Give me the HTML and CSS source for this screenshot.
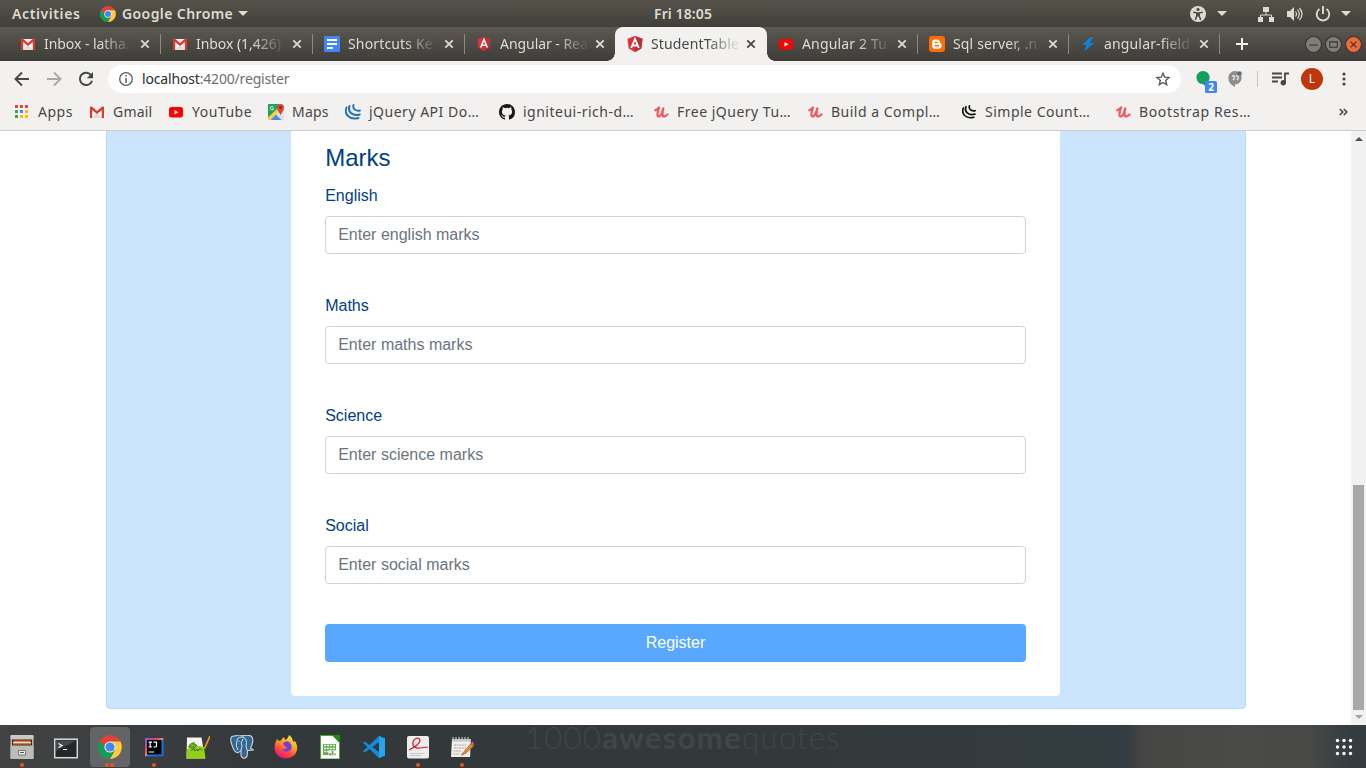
FILE: index.html
```html
<!DOCTYPE html>
<html lang="en">
<head>
<meta charset="utf-8">
<title>StudentTable</title>
<link rel="stylesheet" href="styles.css">
</head>
<body>
<svg class="defs" width="0" height="0" aria-hidden="true">
  <symbol id="chrome" viewBox="0 0 24 24">
    <circle cx="12" cy="12" r="12" fill="#db4437"/>
    <path d="M1.6 6A12 12 0 0 0 12 24L17.2 15 12 12H7Z" fill="#0f9d58"/>
    <path d="M12 24A12 12 0 0 0 22.4 6.5H12L17.2 15Z" fill="#ffcd40"/>
    <circle cx="12" cy="12" r="5.6" fill="#f1f1f1"/><circle cx="12" cy="12" r="4.6" fill="#4285f4"/>
  </symbol>
  <symbol id="gmail" viewBox="0 0 16 16">
    <path d="M1 3h14v11H1z" fill="#f2f2f2"/><path d="M3 14l5-5 5 5z" fill="#ddd"/>
    <path d="M1 14V3.4Q1 2.500 2 2.500h.8L8 7l5.200-4.500H14q1 0 1 .9V14h-2.200V6L8 10 3.200 6v8z" fill="#d93b30"/>
  </symbol>
  <symbol id="docs" viewBox="0 0 16 16"><rect width="16" height="16" rx="1.300" fill="#4285f4"/><path d="M3 4h10M3 8h10M3 12h6" stroke="#fff" stroke-width="2"/></symbol>
  <symbol id="angular" viewBox="0 0 16 16"><path d="M8 0l7.500 2.700L14.300 12.500 8 16 1.700 12.500.5 2.700z" fill="#dd3238"/><path d="M8 0l7.500 2.700L14.300 12.500 8 16z" fill="#bd2f36"/><path d="M4.200 12L8 3l3.800 9M5.800 9.500h4.400" fill="none" stroke="#fff" stroke-width="1.800"/></symbol>
  <symbol id="youtube" viewBox="0 0 16 16"><rect x="1" y="3" width="14" height="10.500" rx="2.500" fill="#f00"/><path d="M6.500 6v4.400l4-2.200z" fill="#fff"/></symbol>
  <symbol id="blogger" viewBox="0 0 16 16"><rect width="16" height="16" rx="3" fill="#ff6b05"/><path d="M6 3.500h2.200a2.500 2.500 0 0 1 2.500 2.500q0 1.200 1.800 1.500V10a2.700 2.700 0 0 1-2.700 2.700H6A2.700 2.700 0 0 1 3.200 10V6.200A2.700 2.700 0 0 1 6 3.500z" fill="#fff"/><path d="M6.200 6.500h1.700M6.200 9.800h3.300" stroke="#ff6b05" stroke-width="1.400" stroke-linecap="round"/></symbol>
  <symbol id="bolt" viewBox="0 0 16 16"><path d="M10.500 1L2.500 9h4L4 15.500 14 7H9.600L13 1z" fill="#0b84e0"/></symbol>
  <symbol id="maps" viewBox="0 0 16 16"><rect width="16" height="16" rx="1.500" fill="#e0e2e5"/><path d="M0 15V1q0-1 1-1h10v5L0 16z" fill="#1ea35a"/><path d="M0 16V13.500L10.500 3.500 13 6 3 16z" fill="#ffcf3e"/><path d="M2.500 16l5.500-5.500L13.500 16z" fill="#4a8af4"/><path d="M9 3.500a3.500 3.500 0 0 1 7 0q0 2-1.700 4.500L12.600 11 10.700 8Q9 5.500 9 3.500z" fill="#db4437"/><circle cx="12.500" cy="3.500" r="1.300" fill="#7b231e"/><path d="M5.400 3.200A1.700 1.700 0 1 0 5.500 5H4" fill="none" stroke="#fff"/></symbol>
  <symbol id="jquery" viewBox="0 0 16 16"><g fill="none" stroke="currentColor" stroke-linecap="round"><path d="M1.500 3.500Q-.5 8.500 3 12q4 3.800 10.500 2" stroke-width="1.900"/><path d="M4.500 2Q3 6.500 6 9q3.500 3 8.700 1.500" stroke-width="2.100"/><path d="M8.500 1Q7.500 4 10 5.700q2.500 1.500 5 .8" stroke-width="1.900"/></g></symbol>
  <symbol id="github" viewBox="0 0 16 16"><path d="M8 0C3.580 0 0 3.580 0 8c0 3.540 2.290 6.530 5.470 7.590.4.070.55-.17.55-.38v-1.490c-2.230.48-2.690-.95-2.690-.95-.36-.93-.89-1.170-.89-1.170-.73-.5.050-.49.050-.49.8.06 1.230.83 1.230.83.71 1.230 1.870.87 2.330.66.070-.52.280-.87.510-1.070-1.780-.2-3.640-.89-3.640-3.950 0-.87.310-1.590.82-2.150-.08-.2-.36-1.020.08-2.120 0 0 .67-.21 2.200.82a7.600 7.600 0 0 1 4 0c1.530-1.040 2.200-.82 2.200-.82.44 1.100.16 1.920.08 2.120.51.560.82 1.270.82 2.150 0 3.070-1.870 3.750-3.650 3.950.29.25.54.73.54 1.480v2.200c0 .21.150.46.550.38A8 8 0 0 0 16 8c0-4.420-3.580-8-8-8z" fill="#1b1817"/></symbol>
  <symbol id="udemy" viewBox="0 0 16 16"><path d="M2.300 6.300Q4.500 5.300 6 3.500 4.500 8 4.400 10.500q.1 2.600 2.200 1.700Q8.600 11 10.300 4.500 9 9 9.800 11.700q1 2 4.700-1.200" fill="none" stroke="#ef5b60" stroke-width="2.300" stroke-linecap="round" stroke-linejoin="round"/></symbol>
  <symbol id="x" viewBox="0 0 10 10"><path d="M1.300 1.300l7.400 7.400M8.700 1.300L1.300 8.700" stroke="currentColor" stroke-width="1.800"/></symbol>
</svg>

<div class="topbar">
  <span class="activities">Activities</span>
  <svg class="app-icon"><use href="#chrome"/></svg>
  <span class="app-name">Google Chrome</span>
  <i class="caret"></i>
  <span class="clock">Fri 18:05</span>
  <div class="tray">
    <svg width="16" height="16" viewBox="0 0 16 16"><circle cx="8" cy="8" r="8" fill="#dfdbd2"/><circle cx="8" cy="3.500" r="1.600" fill="#4b4a44"/><path d="M3.200 6.300l3.600.5v3L5.300 14M12.800 6.300l-3.600.5v3l1.500 4.200M8 6.500v4" fill="none" stroke="#4b4a44" stroke-width="1.500"/></svg>
    <i class="caret c1"></i>
    <svg class="net" width="16" height="16" viewBox="0 0 16 16"><path d="M5 1h6v5H5zM0 11h5v5H0zM11 11h5v5h-5z" fill="#dfdbd2"/><path d="M8 5v4M2.500 12V9h11v3" fill="none" stroke="#dfdbd2"/></svg>
    <svg class="vol" width="17" height="16" viewBox="0 0 17 16"><path d="M1 5h3l4-4v14l-4-4H1z" fill="#dfdbd2"/><path d="M9.500 5.500q2 2.500 0 5M11.500 3.500q3.500 4.500 0 9M13.500 2q5 6 0 12" fill="none" stroke="#dfdbd2" stroke-width="1.200"/></svg>
    <svg class="pow" width="16" height="16" viewBox="0 0 16 16"><path d="M4.500 3a6.300 6.300 0 1 0 7 0M8 0v8" fill="none" stroke="#dfdbd2" stroke-width="1.900"/></svg>
    <i class="caret c2"></i>
  </div>
</div>

<div class="tabs">
  <div class="tab wide"><svg class="fav"><use href="#gmail"/></svg><span class="title snug">Inbox - latha.</span><svg class="close"><use href="#x"/></svg></div>
  <div class="tab wide"><svg class="fav"><use href="#gmail"/></svg><span class="title snug">Inbox (1,426)</span><svg class="close"><use href="#x"/></svg></div>
  <div class="tab wide"><svg class="fav"><use href="#docs"/></svg><span class="title">Shortcuts Ke</span><svg class="close"><use href="#x"/></svg></div>
  <div class="tab last"><svg class="fav small"><use href="#angular"/></svg><span class="title snug">Angular - Rea</span><svg class="close"><use href="#x"/></svg></div>
  <div class="tab active"><svg class="fav"><use href="#angular"/></svg><span class="title">StudentTable</span><svg class="close"><use href="#x"/></svg></div>
  <div class="tab"><svg class="fav"><use href="#youtube"/></svg><span class="title">Angular 2 Tu</span><svg class="close"><use href="#x"/></svg></div>
  <div class="tab"><svg class="fav"><use href="#blogger"/></svg><span class="title">Sql server, .n</span><svg class="close"><use href="#x"/></svg></div>
  <div class="tab"><svg class="fav"><use href="#bolt"/></svg><span class="title">angular-field</span><svg class="close"><use href="#x"/></svg></div>
  <svg class="plus" width="12" height="12" viewBox="0 0 12 12"><path d="M6 0v12M0 6h12" stroke="#f2f1f0" stroke-width="2"/></svg>
  <div class="window-buttons">
    <svg viewBox="0 0 16 16"><circle cx="8" cy="8" r="7.500"/><path d="M4 8.500h8"/></svg>
    <svg viewBox="0 0 16 16"><circle cx="8" cy="8" r="7.500"/><path d="M4.500 5.500h7v5h-7z"/></svg>
    <svg class="quit" viewBox="0 0 16 16"><circle cx="8" cy="8" r="7.500"/><path d="M5.200 5.200l5.600 5.600M10.800 5.200l-5.600 5.600"/></svg>
  </div>
</div>

<div class="toolbar">
  <svg width="16" height="16" viewBox="0 0 16 16"><path d="M15 8H2M8 1.500L1.500 8 8 14.500" fill="none" stroke="#474747" stroke-width="1.900"/></svg>
  <svg width="16" height="16" viewBox="0 0 16 16"><path d="M1 8h13M8 1.500L14.500 8 8 14.500" fill="none" stroke="#aaa9a7" stroke-width="1.900"/></svg>
  <svg width="16" height="16" viewBox="0 0 16 16"><path d="M13.300 4.500A6.200 6.200 0 1 0 14 9.700" fill="none" stroke="#474747" stroke-width="2"/><path d="M15 1v6.200H8.800z" fill="#474747"/></svg>
  <div class="omnibox">
    <svg width="14" height="14" viewBox="0 0 14 14"><circle cx="7" cy="7" r="6.300" fill="none" stroke="#5a5a5a" stroke-width="1.300"/><path d="M7 3v1.600M7 6v5" stroke="#5a5a5a" stroke-width="1.500"/></svg>
    <span class="url"><b>localhost</b>:4200/register</span>
    <svg class="star" width="16" height="16" viewBox="0 0 16 16"><path d="M8 2.200l1.700 4 4.300.4-3.300 2.900 1 4.200L8 11.500l-3.700 2.200 1-4.200L2 6.600l4.300-.4z" fill="none" stroke="#5a5a5a" stroke-width="1.400"/></svg>
  </div>
  <div class="ext">
    <svg width="22" height="25" viewBox="0 0 22 25"><circle cx="7" cy="9.500" r="6.600" fill="#12a05c"/><path d="M5 14l4 4v-4z" fill="#12a05c"/><rect x="9" y="13" width="12" height="12" rx="1.500" fill="#4285f4"/></svg>
    <span class="badge">2</span>
  </div>
  <svg class="hang" width="14" height="16" viewBox="0 0 14 16"><path d="M7 0a6.700 6.700 0 0 1 0 13.400V16Q.3 13 .3 6.700A6.700 6.700 0 0 1 7 0z" fill="#8e8e8e"/><path d="M4 5h2.300v2.500L5 9M7.800 5h2.300v2.500L8.800 9" fill="none" stroke="#e4e4e4" stroke-width="1.300"/><circle cx="11.500" cy="2.500" r="2.200" fill="#686868"/></svg>
  <i class="rule"></i>
  <svg class="music" width="17" height="14" viewBox="0 0 17 14"><path d="M0 1.500h10M0 5.500h10M0 9.500h6M13 11V1.500h4" fill="none" stroke="#474747" stroke-width="1.800"/><circle cx="11.300" cy="10.800" r="2.700" fill="#474747"/></svg>
  <span class="avatar">L</span>
  <svg width="4" height="14" viewBox="0 0 4 14"><g fill="#474747"><circle cx="2" cy="2" r="1.600"/><circle cx="2" cy="7" r="1.600"/><circle cx="2" cy="12" r="1.600"/></g></svg>
</div>

<div class="bookmarks">
  <div class="apps"><svg viewBox="0 0 16 16"><path d="M2 1h3v3H2zM7 1h3v3H7zM12 1h3v3h-3z" fill="#ea4335"/><path d="M2 6h3v3H2zM2 11h3v3H2z" fill="#34a853"/><path d="M7 6h3v3H7z" fill="#4285f4"/><path d="M12 6h3v3h-3zM7 11h3v3H7zM12 11h3v3h-3z" fill="#fbbc05"/></svg><span>Apps</span></div>
  <div class="tight"><svg><use href="#gmail"/></svg><span>Gmail</span></div>
  <div><svg><use href="#youtube"/></svg><span>YouTube</span></div>
  <div class="tight"><svg><use href="#maps"/></svg><span>Maps</span></div>
  <div class="blue"><svg><use href="#jquery"/></svg><span>jQuery API Do…</span></div>
  <div><svg><use href="#github"/></svg><span>igniteui-rich-d…</span></div>
  <div><svg><use href="#udemy"/></svg><span>Free jQuery Tu…</span></div>
  <div><svg><use href="#udemy"/></svg><span>Build a Compl…</span></div>
  <div><svg class="dark"><use href="#jquery"/></svg><span>Simple Count…</span></div>
  <div class="boot"><svg><use href="#udemy"/></svg><span>Bootstrap Res…</span></div>
  <svg class="more" width="9" height="8" viewBox="0 0 9 8"><path d="M.8 1l3 3-3 3M4.800 1l3 3-3 3" fill="none" stroke="#3f3f3f" stroke-width="1.500"/></svg>
</div>

<div class="viewport">
  <main class="page">
    <section class="panel">
      <form class="card">
        <h4>Marks</h4>
        <div class="field"><label for="en">English</label><input id="en" placeholder="Enter english marks"></div>
        <div class="field"><label for="ma">Maths</label><input id="ma" placeholder="Enter maths marks"></div>
        <div class="field"><label for="sc">Science</label><input id="sc" placeholder="Enter science marks"></div>
        <div class="field"><label for="so">Social</label><input id="so" placeholder="Enter social marks"></div>
        <button type="button">Register</button>
      </form>
    </section>
  </main>
  <div class="scrollbar"><i class="up"></i><i class="thumb"></i><i class="down"></i></div>
</div>

<div class="dock">
  <div class="launcher run1"><svg viewBox="0 0 24 24"><rect x=".5" width="23" height="24" rx="1.500" fill="#b9b8b5"/><rect x=".5" width="23" height="4" rx="1" fill="#c9c8c5"/><rect x="2" y="4.500" width="20" height="7" fill="#3c302b"/><path d="M3.500 5.500h17V7h-17z" fill="#e9732f"/><path d="M3 7h18v1.500H3z" fill="#f3dfca"/><path d="M3 8.500h18v1H3z" fill="#e9732f"/><path d="M.5 10.500h23V23q0 1-1 1h-21q-1 0-1-1z" fill="#bdbcb9"/><path d="M8.500 15.500h7v4.500h-7z" fill="#eee" stroke="#777"/><path d="M10 17.500h4" stroke="#555"/></svg></div>
  <div class="launcher"><svg viewBox="0 0 24 24"><rect x=".7" y="4.200" width="22.600" height="18.500" fill="#24282a" stroke="#d8d8d5" stroke-width="1.500"/><path d="M2 5.500h20L2 16z" fill="#45494c"/><path d="M4.500 8.500l3.500 2-3.500 2M9 14.500h4" fill="none" stroke="#fff" stroke-width="1.200"/></svg></div>
  <div class="launcher current run2"><svg viewBox="0 0 24 24"><use href="#chrome"/></svg></div>
  <div class="launcher run1"><svg viewBox="0 0 24 24"><defs><linearGradient id="ij" x2="1" y2="1"><stop stop-color="#7b5cf0"/><stop offset=".3" stop-color="#d33c86"/><stop offset=".5" stop-color="#fb8651"/><stop offset=".55" stop-color="#087cfa"/><stop offset="1" stop-color="#236cf5"/></linearGradient></defs><path d="M3 3h18.500v18L3 21.500z" fill="url(#ij)"/><path d="M5 5h14.500v14.500H5z" fill="#000"/><path d="M6.500 7.200h3.500M8.200 7v5M6.500 12h3.500M11.500 7.200h3v3.500q0 1.300-1.300 1.300h-1.700M6.500 17h5.500" fill="none" stroke="#fff" stroke-width="1.200"/></svg></div>
  <div class="launcher"><svg viewBox="0 0 24 24"><path d="M1 2.500h14.500l3.500 21H.5z" fill="#f5f6ee"/><path d="M1 14q8-5 17-2l1.500 11.500H.5z" fill="#91cf19"/><path d="M2.500 12q1-4 6-4.500l-.5 2 3 .5-1.500 2L6 13z" fill="#69b51d" stroke="#35651c" stroke-width=".7"/><path d="M5 15.500l3-2 1 2.500 2-2 1 2 2-2.500 2 2" fill="none" stroke="#35651c"/><path d="M24 1l-5.500 12.500" stroke="#e99a25" stroke-width="1.700"/></svg></div>
  <div class="launcher"><svg viewBox="0 0 24 24"><path d="M5 1Q10-1 13 1q4-1.500 8 0 4 3-.5 12l3 2-6 .5-.5 6q-4 4-6-1v-5Q7 20 4 15-3 0 5 1z" fill="#336791" stroke="#d0d8df" stroke-width="1.100"/><path d="M8 15Q5 11 7 6q0-4 5-4 6 1 4 9l1 4M13 4q-3 4-1 7l-1 4" fill="none" stroke="#d7e0e7" stroke-width="1"/><circle cx="9" cy="6" r=".6" fill="#fff"/></svg></div>
  <div class="launcher"><svg viewBox="0 0 24 24"><defs><linearGradient id="ff" x1=".8" x2=".3" y2="1"><stop stop-color="#fff04a"/><stop offset=".4" stop-color="#ffa51f"/><stop offset=".75" stop-color="#ff3a4c"/><stop offset="1" stop-color="#e01585"/></linearGradient></defs><path d="M3 4l2 2 2-.5Q8 3 10 2l1 3q3-1 4-5 4 3 4 7l2-1q3 5 2 9-2 8-11 8.500Q2 23 .5 14 0 9 3 4z" fill="url(#ff)"/><path d="M9 8q5-4 8 1 2 5-2 7-5 2-7-2 4 1 5-2-3 0-4-4z" fill="#7140d7"/></svg></div>
  <div class="launcher"><svg viewBox="0 0 24 24"><path d="M2.500.5H15l6.500 7v16.500h-19z" fill="#fff" stroke="#46a833"/><path d="M14 0h8v8z" fill="#159006"/><path d="M5 9h13v11H5z" fill="#62ae4e"/><path d="M6 10.500h11M6 13.500h11M6 16.500h11" stroke="#e6f3e1" stroke-width="1.500" stroke-dasharray="2.300 .7"/><path d="M10.500 15.500h8v5.500h-8z" fill="#fff"/><path d="M11 18h2v2.500h-2z" fill="#ef7d3b"/><path d="M13.500 16h2v4.500h-2z" fill="#3ba6df"/><path d="M16 18h2v2.500h-2z" fill="#f0b24a"/></svg></div>
  <div class="launcher"><svg viewBox="0 0 24 24"><path d="M17 1l6 2.500v17L17 23 7.500 14 3 17.500.8 16.300 5.500 12 .8 7.700 3 6.500 7.500 10zM17 7l-6.500 5 6.500 5z" fill="#168bd8" fill-rule="evenodd"/><path d="M17 1l6 2.500v17L17 23z" fill="#27a5f2"/></svg></div>
  <div class="launcher run1"><svg viewBox="0 0 24 24"><rect x="1" y="1" width="22" height="22.500" rx="2" fill="#eeeded"/><path d="M4 18.500h14M4 20.500h11" stroke="#c8c8c8"/><path d="M3 15Q13 10 14 6q0-3-3-3-5 2-4 7 1 3.500 7 3l8-1" fill="none" stroke="#d61b29" stroke-width="1.200"/></svg></div>
  <div class="launcher run1"><svg viewBox="0 0 24 24"><path d="M2 4h19l-1 18H1z" fill="#f0efec"/><path d="M2 4h19v2.500H2z" fill="#bbb"/><path d="M3 2v4M6 2v4M9 2v4M12 2v4M15 2v4M18 2v4" stroke="#ddd"/><path d="M4 10h13M4 13h12M3.500 16H11M3.500 19H10" stroke="#aaa" stroke-dasharray="2 .6"/><path d="M12 19l8.500-10 3 2.300-8.500 7.500-3.500 1.500z" fill="#e98b2f" stroke="#96521a" stroke-width=".6"/><path d="M20.500 9l2-2.500L24 8.500l-.5 2.800z" fill="#d95d59"/></svg></div>
  <span class="watermark">1000<b>awesome</b>quotes</span>
  <svg class="grid" viewBox="0 0 18 18"><g fill="#fff"><circle cx="2.500" cy="2.500" r="1.700"/><circle cx="9" cy="2.500" r="1.700"/><circle cx="15.500" cy="2.500" r="1.700"/><circle cx="2.500" cy="9" r="1.700"/><circle cx="9" cy="9" r="1.700"/><circle cx="15.500" cy="9" r="1.700"/><circle cx="2.500" cy="15.500" r="1.700"/><circle cx="9" cy="15.500" r="1.700"/><circle cx="15.500" cy="15.500" r="1.700"/></g></svg>
</div>
</body>
</html>
```
FILE: styles.css
```css
* { box-sizing: border-box; }
body { margin: 0; width: 1366px; height: 768px; overflow: hidden; display: flex; flex-direction: column; font-family: "Noto Sans", sans-serif; background: #fff; }
svg { flex: none; display: block; }
.defs { position: absolute; }

.topbar { position: relative; height: 27px; flex: none; display: flex; align-items: center; padding: 0 15px 0 12px; background: linear-gradient(#56534b, #403f3a); color: #dfdbd2; font-size: 14px; font-weight: 600; white-space: nowrap; }
.activities { width: 88px; letter-spacing: .6px; }
.app-icon { width: 16px; height: 16px; margin-right: 6px; }
.app-name { width: 116px; letter-spacing: .4px; }
.caret { width: 0; height: 0; border: 5px solid transparent; border-top-color: #dfdbd2; border-bottom: 0; }
.clock { position: absolute; left: 654px; letter-spacing: .1px; }
.tray { display: flex; align-items: center; margin-left: auto; }
.c1 { margin-left: 11px; }
.net { margin-left: 31px; }
.vol { margin-left: 12px; }
.pow { margin-left: 12px; }
.c2 { margin-left: 10px; }

.tabs { height: 34px; flex: none; display: flex; align-items: center; padding-left: 9px; background: linear-gradient(#5b5850, #3e3d39); }
.tab { position: relative; width: 151px; height: 34px; flex: none; display: flex; align-items: center; padding-left: 11px; color: #dfdbd2; }
.tab.wide { width: 152px; }
.tab::after { content: ""; position: absolute; right: 0; top: 7px; width: 1px; height: 20px; background: #8b8982; }
.tab.last::after { display: none; }
.fav { width: 16px; height: 16px; margin-right: 8px; }
.fav.small { width: 14px; height: 14px; margin: 0 9px 0 1px; }
.title { width: 90px; overflow: hidden; white-space: nowrap; font-size: 14px; line-height: 20px; letter-spacing: .15px; -webkit-mask-image: linear-gradient(90deg, #000 62%, transparent); mask-image: linear-gradient(90deg, #000 62%, transparent); }
.title.snug { letter-spacing: -.05px; }
.close { width: 10px; height: 10px; margin-left: 5px; }
.wide .close { margin-left: 6px; }
.tab.active { width: 152px; margin-left: -1px; padding-left: 12px; background: #f2f1f0; color: #474747; border-radius: 8px 8px 0 0; }
.tab.active::before, .tab.active::after { content: ""; display: block; position: absolute; top: auto; bottom: 0; width: 8px; height: 8px; background: radial-gradient(circle at 0 0, transparent 7.500px, #f2f1f0 8px); }
.tab.active::before { left: -8px; right: auto; }
.tab.active::after { right: -8px; background: radial-gradient(circle at 100% 0, transparent 7.500px, #f2f1f0 8px); }
.plus { margin-left: 16px; }
.window-buttons { display: flex; gap: 3px; margin-left: auto; padding-right: 4px; }
.window-buttons svg { width: 17px; height: 17px; fill: #807e77; stroke: #34332f; }
.window-buttons path { fill: none; }
.window-buttons .quit { fill: #ef683b; }

.toolbar { height: 36px; flex: none; display: flex; align-items: center; gap: 16px; padding: 0 19px 0 14px; background: #f2f1f0; }
.omnibox { width: 1073px; height: 28px; margin-left: -2px; display: flex; align-items: center; padding: 0 10px 0 11px; border-radius: 14px; background: #fff; }
.url { margin-left: 9px; font-size: 14px; line-height: 20px; color: #6e6e6e; letter-spacing: -.17px; }
.url b { font-weight: 400; color: #2d2d2d; }
.star { margin-left: auto; }
.ext { position: relative; margin: 2px -6px 0 -1px; }
.badge { position: absolute; left: 9px; top: 13px; width: 12px; text-align: center; font-size: 10px; line-height: 12px; font-weight: 700; color: #fff; }
.rule { width: 1px; height: 16px; margin-left: -1px; background: #c7c6c4; }
.music { margin-left: -2px; }
.avatar { width: 22px; height: 22px; margin: 0 3px 0 -4px; border-radius: 50%; background: #bf360c; color: #fff; font-size: 12px; line-height: 22px; text-align: center; }

.bookmarks { height: 34px; flex: none; display: grid; grid-template-columns: 76px 79px 100px 77px 154px 154px 154px 154px 154px 1fr 27px; align-items: center; padding-left: 13px; padding-bottom: 3px; border-bottom: 1px solid #ccc; background: #f2f1f0; color: #474747; font-size: 14px; line-height: 20px; letter-spacing: .5px; white-space: nowrap; }
.bookmarks div { display: flex; align-items: center; gap: 8px; }
.bookmarks div svg { width: 16px; height: 16px; }
.bookmarks .apps { gap: 9px; }
.bookmarks .tight { letter-spacing: .2px; }
.bookmarks .boot { letter-spacing: .65px; }
.blue svg { color: #2372b5; }
.bookmarks .dark { color: #111; width: 14px; height: 14px; margin: 0 1px; }

.viewport { height: 594px; flex: none; display: flex; overflow: hidden; font-family: "Liberation Sans", Arial, sans-serif; font-size: 16px; }
.page { flex: 1; padding-left: 106px; }
.panel { width: 1140px; height: 578px; border: 1px solid #b8daff; border-top: 0; border-radius: 0 0 4px 4px; background: #cce5ff; padding-left: 184px; }
.card { width: 769px; height: 565px; padding: 12px 34px 0; border-radius: 0 0 4px 4px; background: #fff; color: #004085; }
.card h4 { margin: 0 0 8px; padding-left: .2px; font-size: 24px; line-height: 29px; font-weight: 400; }
.field { height: 110px; }
.field label { display: block; margin-bottom: 8px; line-height: 24px; padding: 4px 0 0 .2px; height: 28px; }
.field input { display: block; width: 100%; height: 38px; padding: 6px 12px 6px 12.200px; border: 1px solid #ced4da; border-radius: 4px; font: inherit; }
.field input::placeholder { color: #6c757d; opacity: 1; }
.card button { display: block; width: 100%; height: 38px; margin-top: 4px; border: 0; border-radius: 4px; background: #59a8ff; color: #fff; font: inherit; }
.scrollbar { width: 15px; display: flex; flex-direction: column; align-items: center; background: #f1f1f1; }
.up, .down { width: 0; height: 0; border: 4px solid transparent; }
.up { margin-top: 6px; border-top: 0; border-bottom-color: #505050; }
.thumb { width: 11px; height: 225px; margin-top: 344px; background: #a8a8a8; }
.down { margin-top: 5px; border-bottom: 0; border-top-color: #a3a3a3; }

.dock { position: relative; height: 43px; flex: none; display: flex; background: linear-gradient(90deg, transparent 1125px, #464745 1145px, #4a4a48 1240px, #484947 1310px, transparent 1350px), linear-gradient(90deg, #424343, #33383b 20%, #33393b 60%, #333c40 80%, #353c40); }
.launcher { position: relative; width: 44px; height: 43px; display: flex; justify-content: center; padding-top: 10px; }
.launcher svg { position: relative; width: 24px; height: 24px; }
.current::before { content: ""; position: absolute; left: 2px; top: 2px; width: 40px; height: 40px; border-radius: 4px; background: #626466; }
.run1::after, .run2::after { content: ""; position: absolute; left: 20px; top: 38px; width: 4px; height: 4px; border-radius: 50%; background: #e95420; }
.run2::after { left: 17px; box-shadow: 5px 0 #e95420; }
.watermark { margin-left: 41px; font-family: Lato, sans-serif; font-weight: 300; font-size: 31px; line-height: 25px; letter-spacing: 1.300px; color: #414648; }
.watermark b { font-weight: 700; }
.grid { width: 18px; height: 18px; margin: 13px 13px 0 auto; }
```
